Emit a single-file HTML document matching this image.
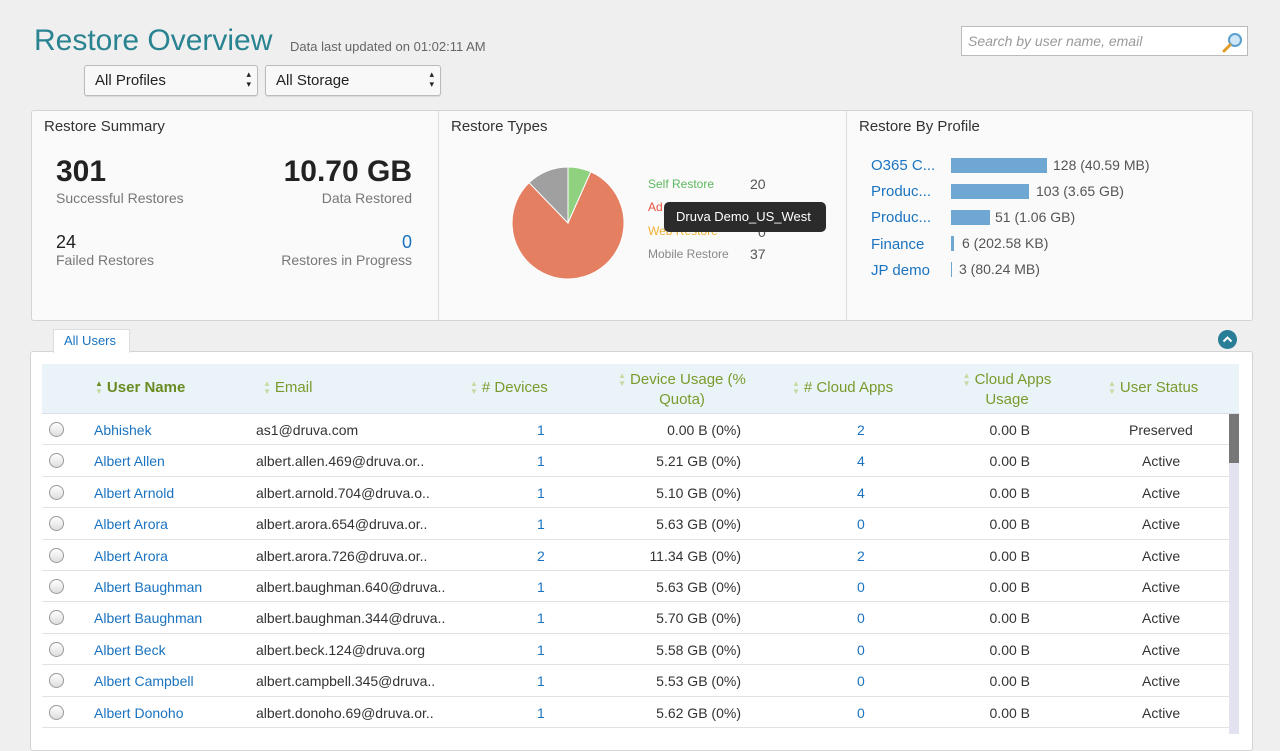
<!DOCTYPE html>
<html><head><meta charset="utf-8"><style>
*{box-sizing:border-box;margin:0;padding:0}
body{width:1280px;height:730px;overflow:hidden;background:#efefef;font-family:"Liberation Sans",sans-serif;color:#333;position:relative;font-size:14px}
.a{position:absolute;white-space:nowrap}
.blue{color:#1a73c0}
.sel{position:absolute;top:65px;height:31px;border:1px solid #bbb;border-radius:3px;background:#f8f8f8;font-size:15px;padding:6px 10px;color:#222;box-shadow:0 1px 1px rgba(0,0,0,.1)}
.sel:after{content:"\25B4\A\25BE";white-space:pre;position:absolute;right:6px;top:3px;font-size:9px;line-height:10px}
.panel{position:absolute;background:#fafafa;border:1px solid #d4d4d4;border-radius:3px}
.th{position:absolute;color:#7a9a2e;font-size:15px;text-align:center;line-height:20px}
.s{display:inline-block;color:#c5d9a0;font-size:8px;line-height:8px;margin-right:4px;vertical-align:middle;white-space:pre}
.row{position:absolute;left:42px;width:1187px;height:31.4px;border-bottom:1px solid #e2e2e2;font-size:14px;background:#fff}
.row span{position:absolute;top:8px;white-space:nowrap}
.rad{position:absolute;left:7px;top:8px;width:15px;height:15px;border-radius:50%;border:1px solid #999;background:linear-gradient(#fff,#ddd)}
</style></head><body>
<div class="a" style="left:34px;top:24px;font-size:30px;color:#2a8391">Restore Overview</div>
<div class="a" style="left:290px;top:39px;font-size:13px;color:#666">Data last updated on 01:02:11 AM</div>
<div class="sel" style="left:84px;width:174px">All Profiles</div>
<div class="sel" style="left:265px;width:176px">All Storage</div>
<div class="a" style="left:961px;top:26px;width:287px;height:30px;border:1px solid #bbb;background:#fff;font-style:italic;color:#999;font-size:14px;padding:6px 6px">Search by user name, email</div>
<svg class="a" style="left:1221px;top:31px" width="24" height="22"><circle cx="14" cy="9" r="6" fill="#cfe7f5" stroke="#5a9fcf" stroke-width="2"/><line x1="9" y1="14" x2="3" y2="20" stroke="#e09a2a" stroke-width="3" stroke-linecap="round"/></svg>

<div class="panel" style="left:31px;top:110px;width:1222px;height:211px"></div>
<div class="a" style="left:438px;top:111px;width:1px;height:209px;background:#ddd"></div>
<div class="a" style="left:846px;top:111px;width:1px;height:209px;background:#ddd"></div>
<div class="a" style="left:44px;top:118px;font-size:15px">Restore Summary</div>
<div class="a" style="left:56px;top:155px;font-size:30px;font-weight:bold;color:#222">301</div>
<div class="a" style="left:56px;top:190px;font-size:14px;color:#777">Successful Restores</div>
<div class="a" style="right:868px;top:155px;font-size:30px;font-weight:bold;color:#222">10.70 GB</div>
<div class="a" style="right:868px;top:190px;font-size:14px;color:#777">Data Restored</div>
<div class="a" style="left:56px;top:232px;font-size:18px;color:#222">24</div>
<div class="a" style="left:56px;top:252px;font-size:14px;color:#777">Failed Restores</div>
<div class="a blue" style="right:868px;top:232px;font-size:18px">0</div>
<div class="a" style="right:868px;top:252px;font-size:14px;color:#777">Restores in Progress</div>

<div class="a" style="left:451px;top:118px;font-size:15px">Restore Types</div>
<svg class="a" style="left:500px;top:155px" width="140" height="140">
<g transform="translate(-500,-155)" stroke="#fff" stroke-width="1">
<path d="M568 223 L568 167 A56 56 0 0 1 590.8 171.8 Z" fill="#8fd17e"/>
<path d="M568 223 L590.8 171.8 A56 56 0 1 1 529.1 182.7 Z" fill="#e47f61"/>
<path d="M568 223 L529.1 182.7 A56 56 0 0 1 568 167 Z" fill="#a0a0a0"/>
</g></svg>
<div class="a" style="left:648px;top:177px;font-size:12px;color:#5cb85c">Self Restore</div>
<div class="a" style="left:750px;top:176px;font-size:14px;color:#555">20</div>
<div class="a" style="left:648px;top:200px;font-size:12px;color:#e5533d">Ad</div>
<div class="a" style="left:648px;top:224px;font-size:12px;color:#f0b030">Web Restore</div>
<div class="a" style="left:758px;top:224px;font-size:14px;color:#555">0</div>
<div class="a" style="left:648px;top:247px;font-size:12px;color:#888">Mobile Restore</div>
<div class="a" style="left:750px;top:246px;font-size:14px;color:#555">37</div>
<div class="a" style="left:664px;top:202px;width:162px;height:30px;background:#2b2b2b;border-radius:5px;color:#fff;font-size:13px;padding:7px 12px">Druva Demo_US_West</div>

<div class="a" style="left:859px;top:118px;font-size:15px">Restore By Profile</div>
<div class="a blue" style="left:871px;top:157px;font-size:15px">O365 C...</div>
<div class="a blue" style="left:871px;top:183px;font-size:15px">Produc...</div>
<div class="a blue" style="left:871px;top:209px;font-size:15px">Produc...</div>
<div class="a blue" style="left:871px;top:236px;font-size:15px">Finance</div>
<div class="a blue" style="left:871px;top:262px;font-size:15px">JP demo</div>
<div class="a" style="left:951px;top:158px;width:96px;height:15px;background:#6ea7d2"></div>
<div class="a" style="left:951px;top:184px;width:78px;height:15px;background:#6ea7d2"></div>
<div class="a" style="left:951px;top:210px;width:39px;height:15px;background:#6ea7d2"></div>
<div class="a" style="left:951px;top:236px;width:3px;height:15px;background:#6ea7d2"></div>
<div class="a" style="left:951px;top:262px;width:1px;height:15px;background:#6ea7d2"></div>
<div class="a" style="left:1053px;top:157px;font-size:14px;color:#555">128 (40.59 MB)</div>
<div class="a" style="left:1036px;top:183px;font-size:14px;color:#555">103 (3.65 GB)</div>
<div class="a" style="left:995px;top:209px;font-size:14px;color:#555">51 (1.06 GB)</div>
<div class="a" style="left:962px;top:235px;font-size:14px;color:#555">6 (202.58 KB)</div>
<div class="a" style="left:959px;top:261px;font-size:14px;color:#555">3 (80.24 MB)</div>

<div class="panel" style="left:30px;top:351px;width:1223px;height:400px;background:#fff"></div>
<div class="a" style="left:53px;top:329px;width:77px;height:24px;background:#fff;border:1px solid #ddd;border-bottom:none;font-size:13px;color:#1a73c0;padding:3px 10px">All Users</div>
<svg class="a" style="left:1218px;top:330px" width="19" height="19"><circle cx="9.5" cy="9.5" r="9.5" fill="#2a7d96"/><path d="M5.5 11.5 L9.5 7.5 L13.5 11.5" fill="none" stroke="#fff" stroke-width="2"/></svg>

<div class="a" style="left:42px;top:364px;width:1197px;height:50px;background:#eaf4f8;border-bottom:1px solid #dde"></div>
<div class="th" style="left:95px;top:378px;font-weight:bold;color:#6a8a22"><span class="s" style="color:#6a8a22">&#9650;
<span style="color:#c5d9a0">&#9660;</span></span>User Name</div>
<div class="th" style="left:263px;top:378px"><span class="s">&#9650;
&#9660;</span>Email</div>
<div class="th" style="left:470px;top:378px"><span class="s">&#9650;
&#9660;</span># Devices</div>
<div class="th" style="left:612px;top:370px;width:140px"><span class="s" style="vertical-align:top;margin-top:2px">&#9650;
&#9660;</span>Device Usage (%<br>Quota)</div>
<div class="th" style="left:792px;top:378px"><span class="s">&#9650;
&#9660;</span># Cloud Apps</div>
<div class="th" style="left:952px;top:370px;width:110px"><span class="s" style="vertical-align:top;margin-top:2px">&#9650;
&#9660;</span>Cloud Apps<br>Usage</div>
<div class="th" style="left:1108px;top:378px"><span class="s">&#9650;
&#9660;</span>User Status</div>

<div class="a" style="left:1229px;top:414px;width:10px;height:320px;background:#e3e2f0"></div>
<div class="a" style="left:1229px;top:414px;width:10px;height:49px;background:#777"></div>

<div class="row" style="top:414px"><div class="rad"></div><span class="blue" style="left:52px">Abhishek</span><span style="left:214px">as1@druva.com</span><span class="blue" style="left:495px">1</span><span style="right:488px">0.00 B (0%)</span><span class="blue" style="left:815px">2</span><span style="right:199px">0.00 B</span><span style="left:1087px">Preserved</span></div>
<div class="row" style="top:445.4px"><div class="rad"></div><span class="blue" style="left:52px">Albert Allen</span><span style="left:214px">albert.allen.469@druva.or..</span><span class="blue" style="left:495px">1</span><span style="right:488px">5.21 GB (0%)</span><span class="blue" style="left:815px">4</span><span style="right:199px">0.00 B</span><span style="left:1100px">Active</span></div>
<div class="row" style="top:476.8px"><div class="rad"></div><span class="blue" style="left:52px">Albert Arnold</span><span style="left:214px">albert.arnold.704@druva.o..</span><span class="blue" style="left:495px">1</span><span style="right:488px">5.10 GB (0%)</span><span class="blue" style="left:815px">4</span><span style="right:199px">0.00 B</span><span style="left:1100px">Active</span></div>
<div class="row" style="top:508.2px"><div class="rad"></div><span class="blue" style="left:52px">Albert Arora</span><span style="left:214px">albert.arora.654@druva.or..</span><span class="blue" style="left:495px">1</span><span style="right:488px">5.63 GB (0%)</span><span class="blue" style="left:815px">0</span><span style="right:199px">0.00 B</span><span style="left:1100px">Active</span></div>
<div class="row" style="top:539.6px"><div class="rad"></div><span class="blue" style="left:52px">Albert Arora</span><span style="left:214px">albert.arora.726@druva.or..</span><span class="blue" style="left:495px">2</span><span style="right:488px">11.34 GB (0%)</span><span class="blue" style="left:815px">2</span><span style="right:199px">0.00 B</span><span style="left:1100px">Active</span></div>
<div class="row" style="top:571px"><div class="rad"></div><span class="blue" style="left:52px">Albert Baughman</span><span style="left:214px">albert.baughman.640@druva..</span><span class="blue" style="left:495px">1</span><span style="right:488px">5.63 GB (0%)</span><span class="blue" style="left:815px">0</span><span style="right:199px">0.00 B</span><span style="left:1100px">Active</span></div>
<div class="row" style="top:602.4px"><div class="rad"></div><span class="blue" style="left:52px">Albert Baughman</span><span style="left:214px">albert.baughman.344@druva..</span><span class="blue" style="left:495px">1</span><span style="right:488px">5.70 GB (0%)</span><span class="blue" style="left:815px">0</span><span style="right:199px">0.00 B</span><span style="left:1100px">Active</span></div>
<div class="row" style="top:633.8px"><div class="rad"></div><span class="blue" style="left:52px">Albert Beck</span><span style="left:214px">albert.beck.124@druva.org</span><span class="blue" style="left:495px">1</span><span style="right:488px">5.58 GB (0%)</span><span class="blue" style="left:815px">0</span><span style="right:199px">0.00 B</span><span style="left:1100px">Active</span></div>
<div class="row" style="top:665.2px"><div class="rad"></div><span class="blue" style="left:52px">Albert Campbell</span><span style="left:214px">albert.campbell.345@druva..</span><span class="blue" style="left:495px">1</span><span style="right:488px">5.53 GB (0%)</span><span class="blue" style="left:815px">0</span><span style="right:199px">0.00 B</span><span style="left:1100px">Active</span></div>
<div class="row" style="top:696.6px"><div class="rad"></div><span class="blue" style="left:52px">Albert Donoho</span><span style="left:214px">albert.donoho.69@druva.or..</span><span class="blue" style="left:495px">1</span><span style="right:488px">5.62 GB (0%)</span><span class="blue" style="left:815px">0</span><span style="right:199px">0.00 B</span><span style="left:1100px">Active</span></div>
</body></html>
